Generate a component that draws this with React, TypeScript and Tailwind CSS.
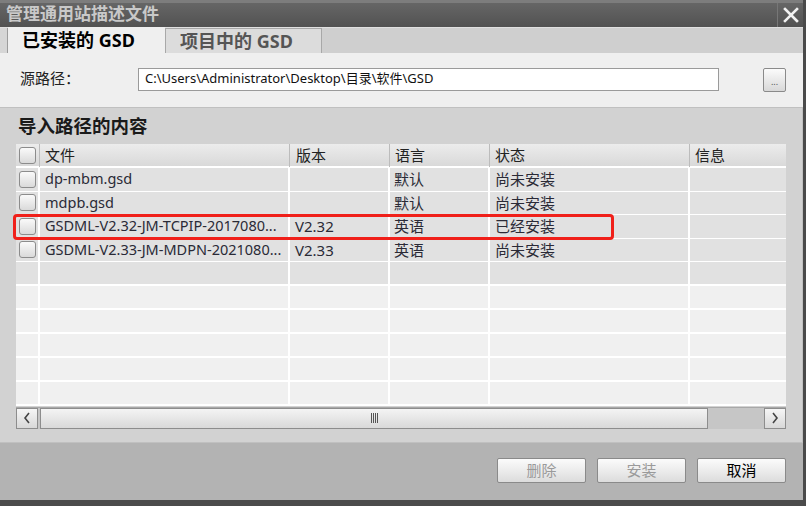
const FONT = { fontFamily: '"Noto Sans", "Noto Sans CJK SC", sans-serif' };

interface Row {
  file: string;
  version: string;
  lang: string;
  status: string;
}

const rows: Row[] = [
  { file: "dp-mbm.gsd", version: "", lang: "默认", status: "尚未安装" },
  { file: "mdpb.gsd", version: "", lang: "默认", status: "尚未安装" },
  { file: "GSDML-V2.32-JM-TCPIP-2017080...", version: "V2.32", lang: "英语", status: "已经安装" },
  { file: "GSDML-V2.33-JM-MDPN-2021080...", version: "V2.33", lang: "英语", status: "尚未安装" },
];

const cols = "grid grid-cols-[24px_250px_100px_100px_200px_96px]";

function Check() {
  return (
    <div className="w-[17px] h-[17px] ml-[3px] rounded-[3px] border border-[#8c8c8c] bg-gradient-to-b from-[#fafafa] to-[#dadada]" />
  );
}

function Btn({ label, disabled }: { label: string; disabled?: boolean }) {
  return (
    <div
      className={
        "w-[89px] h-[25px] flex items-center justify-center border border-[#8a8a8a] rounded-[2px] bg-gradient-to-b from-[#fbfbfb] via-[#ececec] to-[#dcdcdc] text-[15px] " +
        (disabled ? "text-[#9a9a9a]" : "text-black")
      }
    >
      {label}
    </div>
  );
}

export default function App() {
  return (
    <div style={FONT} className="w-[806px] h-[506px] flex flex-col bg-[#b3b3b3] border-r-[3px] border-[#4a4a4a] overflow-hidden">
      {/* title bar */}
      <div className="h-[27px] flex items-stretch border-t-[3px] border-[#7d7d7d] bg-gradient-to-b from-[#666] to-[#525252]">
        <div className="flex-1 pl-[6px] text-[17px] leading-[22px] font-bold text-[#c9c9c9]">管理通用站描述文件</div>
        <div className="w-[26px] border-l border-[#777] flex items-center justify-center">
          <svg width="16" height="16" viewBox="0 0 16 16">
            <path d="M2 2 L14 14 M14 2 L2 14" stroke="#f2f2f2" strokeWidth="2.6" strokeLinecap="square" />
          </svg>
        </div>
      </div>

      {/* tabs */}
      <div className="h-[26px] flex items-end bg-[#cfcfcf] border-t border-[#e0e0e0]">
        <div className="w-[8px] h-[25px] border-r border-[#9c9c9c] bg-[#d6d6d6]" />
        <div className="w-[157px] h-[26px] bg-[#efefef] flex items-center pl-[14px] text-[18px] font-bold text-black">
          已安装的 GSD
        </div>
        <div className="w-[157px] h-[25px] bg-[#dcdcdc] border-l border-r border-t border-[#a8a8a8] flex items-center pl-[14px] text-[18px] font-bold text-[#555]">
          项目中的 GSD
        </div>
      </div>

      {/* source path */}
      <div className="h-[54px] bg-[#efefef] flex items-center pl-[20px] pr-[17px]">
        <div className="w-[118px] text-[15px] text-[#222] -mt-[4px]">源路径：</div>
        <div className="w-[581px] h-[23px] bg-white border border-[#9a9a9a] flex items-center pl-[6px] text-[13px] text-[#111] -mt-[2px]">
          C:\Users\Administrator\Desktop\目录\软件\GSD
        </div>
        <div className="flex-1" />
        <div className="w-[23px] h-[24px] rounded-[2px] border border-[#8a8a8a] bg-gradient-to-b from-[#fbfbfb] to-[#d8d8d8] flex items-end justify-center pb-[5px] text-[9px] leading-none text-[#555]">
          ...
        </div>
      </div>

      {/* import content section */}
      <div className="h-[336px] bg-[#d2d2d2] border-t border-[#bdbdbd] border-b border-r border-[#c0c0c0] pl-[16px] pr-[14px] flex flex-col">
        <div className="h-[36px] pl-[2px] pt-[4px] text-[18.5px] font-bold text-[#1a1a1a]">导入路径的内容</div>

        <div className="relative w-[770px] flex flex-col">
          {/* header */}
          <div className={cols + " h-[24px] bg-gradient-to-b from-[#ececec] to-[#d9d9d9] border-b-2 border-white text-[15px] text-[#222]"}>
            <div className="flex items-center border-r border-[#bcbcbc]"><Check /></div>
            <div className="flex items-center pl-[5px] border-r border-[#bcbcbc]">文件</div>
            <div className="flex items-center pl-[6px] border-r border-[#bcbcbc]">版本</div>
            <div className="flex items-center pl-[5px] border-r border-[#bcbcbc]">语言</div>
            <div className="flex items-center pl-[5px] border-r border-[#bcbcbc]">状态</div>
            <div className="flex items-center pl-[5px]">信息</div>
          </div>

          {rows.map((r) => (
            <div key={r.file} className={cols + " h-[23.5px] bg-[#e1e1e1] border-b border-white text-[15px] text-[#2a2a36]"}>
              <div className="flex items-center border-r-2 border-white"><Check /></div>
              <div className="flex items-center pl-[5px] border-r-2 border-white whitespace-nowrap overflow-hidden text-[14.5px]">{r.file}</div>
              <div className="flex items-center pl-[5px] border-r-2 border-white">{r.version}</div>
              <div className="flex items-center pl-[4px] border-r-2 border-white">{r.lang}</div>
              <div className="flex items-center pl-[5px] border-r-2 border-white">{r.status}</div>
              <div className="flex items-center" />
            </div>
          ))}

          <div className={cols + " h-[23.5px] bg-[#e1e1e1] border-b-2 border-white"}>
            {[0, 1, 2, 3, 4].map((i) => (
              <div key={i} className="border-r-2 border-white" />
            ))}
            <div />
          </div>

          {[0, 1, 2, 3, 4].map((k) => (
            <div key={k} className={cols + " h-[24px] bg-[#f0f0f0] border-b-2 border-white"}>
              {[0, 1, 2, 3, 4].map((i) => (
                <div key={i} className="border-r-2 border-white" />
              ))}
              <div />
            </div>
          ))}

          {/* horizontal scrollbar */}
          <div className="h-[22px] mt-[1px] flex bg-[#c6c6c6] border-t border-[#a8a8a8]">
            <div className="w-[22px] border border-[#8d8d8d] bg-gradient-to-b from-[#f6f6f6] to-[#d8d8d8] flex items-center justify-center">
              <svg width="8" height="12" viewBox="0 0 8 12">
                <path d="M6 1 L2 6 L6 11" stroke="#444" strokeWidth="1.6" fill="none" />
              </svg>
            </div>
            <div className="w-[668px] ml-[2px] border border-[#8d8d8d] bg-gradient-to-b from-[#f4f4f4] to-[#d9d9d9] flex items-center justify-center">
              <div className="flex gap-[1px]">
                <div className="w-[1px] h-[10px] bg-[#555]" />
                <div className="w-[1px] h-[10px] bg-[#555]" />
                <div className="w-[1px] h-[10px] bg-[#555]" />
                <div className="w-[1px] h-[10px] bg-[#555]" />
              </div>
            </div>
            <div className="flex-1" />
            <div className="w-[22px] border border-[#8d8d8d] bg-gradient-to-b from-[#f6f6f6] to-[#d8d8d8] flex items-center justify-center">
              <svg width="8" height="12" viewBox="0 0 8 12">
                <path d="M2 1 L6 6 L2 11" stroke="#444" strokeWidth="1.6" fill="none" />
              </svg>
            </div>
          </div>

          {/* highlight */}
          <div className="absolute left-[-3px] top-[70px] w-[601px] h-[26px] rounded-[4px] border-[3px] border-[#f0201a]" />
        </div>
      </div>

      {/* buttons */}
      <div className="h-[57px] flex items-center justify-end gap-[11px] pr-[17px] pb-[2px]">
        <Btn label="删除" disabled />
        <Btn label="安装" disabled />
        <Btn label="取消" />
      </div>
      <div className="flex-1 bg-[#4c4c4c]" />
    </div>
  );
}
